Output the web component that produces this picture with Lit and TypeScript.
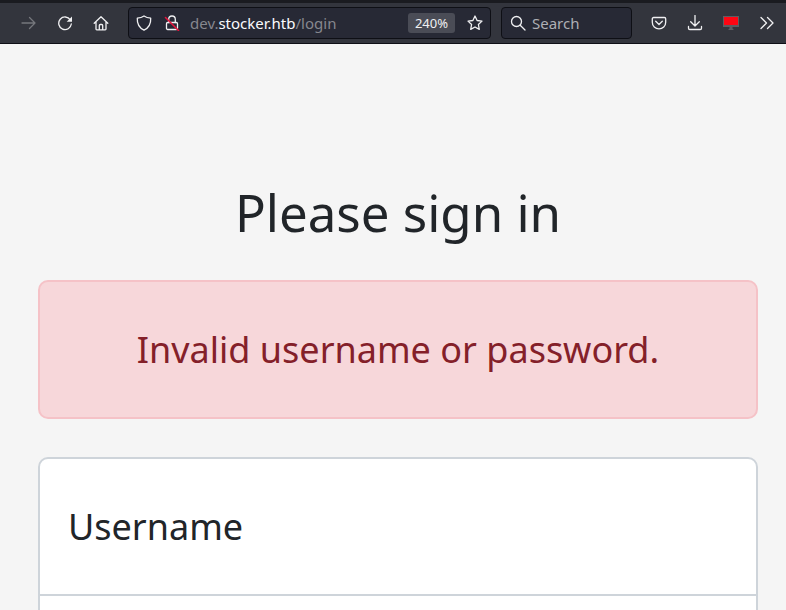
import { LitElement, html, css, svg } from "lit";
import { customElement, property } from "lit/decorators.js";

const icons: Record<string, unknown> = {
  forward: svg`<path d="M1 8h13M8.500 2.500L14 8l-5.500 5.500"/>`,
  reload: svg`<path d="M13.300 4.800A6.300 6.300 0 1 0 14.300 9"/><path class="solid" d="M15 1.500v5.300H9.700z"/>`,
  home: svg`<path d="M1.200 8.300L8 1.700l6.800 6.600M3 7v7a.8.8 0 0 0 .8.8h8.400A.8.8 0 0 0 13 14V7M6.300 14.500V10.500a1 1 0 0 1 1-1h1.400a1 1 0 0 1 1 1v4"/>`,
  shield: svg`<path d="M8 1C6 2.400 3.700 3 1.300 3.200c-.3 5 1.500 9.300 6.700 12 5.200-2.700 7-7 6.700-12C12.300 3 10 2.400 8 1z"/>`,
  lock: svg`<rect x="2.500" y="7.500" width="11" height="7" rx="1.200"/><path d="M4.700 7.500V4.300a3.300 3.300 0 0 1 6.600 0v3.200"/><path class="slash" d="M1.500 2.500l13 13"/>`,
  star: svg`<path d="M8 1l2.100 4.500 4.900.6-3.600 3.400.9 4.900L8 12l-4.300 2.400.9-4.900L1 6.100l4.900-.6z"/>`,
  search: svg`<circle cx="6.500" cy="6.500" r="5"/><path d="M10.200 10.200L15 15"/>`,
  pocket: svg`<path d="M2.600 2.500h10.800c.8 0 1.300.5 1.300 1.300v3.400a6.700 6.700 0 0 1-13.400 0V3.800c0-.8.5-1.300 1.300-1.300z"/><path d="M4.700 6.300L8 9.500l3.300-3.200"/>`,
  download: svg`<path d="M8 .5v10.300M3.700 6.700L8 11l4.300-4.300M1.500 11.500v1.700c0 .8.6 1.300 1.300 1.300h10.400c.7 0 1.300-.5 1.300-1.300v-1.700"/>`,
  monitor: svg`<path class="frame" d="M0 1h16v11H0zM6.500 12h3v1.500l1.500 1.500H5l1.500-1.500z"/><path class="screen" d="M1 2h14v8H1z"/>`,
  more: svg`<path d="M2 2.500L7.500 8 2 13.500M8.500 2.500L14 8l-5.500 5.500"/>`,
};

@customElement("bar-icon")
class BarIcon extends LitElement {
  @property() name = "";

  static styles = css`
    :host { display: block; flex: none; width: 16px; height: 16px; }
    svg { display: block; width: 16px; height: 16px; fill: none; stroke: currentColor;
      stroke-width: 1.3; stroke-linecap: round; stroke-linejoin: round; }
    .solid { fill: currentColor; stroke: none; }
    .slash { stroke: #e2143c; stroke-width: 1.6; }
    .frame { fill: #5c5d62; stroke: none; }
    .screen { fill: #ff0613; stroke: none; }
  `;

  render() {
    return html`<svg viewBox="0 0 16 16" aria-hidden="true">${icons[this.name]}</svg>`;
  }
}

@customElement("browser-bar")
class BrowserBar extends LitElement {
  static styles = css`
    :host {
      display: flex; align-items: center; flex: none; box-sizing: border-box; height: 44px;
      padding: 0 1px 0 11px; border-top: 3px solid #1a1b20; border-bottom: 1px solid #0f0f16;
      background: #33353d; color: #f0f0f2; font: 15px/20px "Noto Sans", sans-serif;
    }
    button { display: flex; align-items: center; justify-content: center; padding: 0;
      border: 0; background: none; color: inherit; font: inherit; }
    .tool { flex: none; width: 36px; height: 32px; }
    .tool:disabled { color: #75777c; }
    .field { display: flex; align-items: center; box-sizing: border-box; height: 32px;
      border: 1px solid #0e0f15; border-radius: 4px; background: #272935; }
    .address { flex: 1; min-width: 0; margin: 0 10px 0 9px; padding: 0 7px; gap: 12px; }
    .url { flex: 1; min-width: 0; margin-left: -2px; white-space: nowrap; overflow: hidden;
      color: #86878e; outline: none; }
    .host { color: #fbfbfe; }
    .zoom { height: 20px; padding: 0 7px; border-radius: 3px; background: #4a4c56;
      font-size: 13px; }
    .search { flex: none; width: 131px; margin-right: 9px; padding: 0 8px; gap: 6px; }
    .query { flex: 1; min-width: 0; padding: 0; border: 0; outline: none; background: none;
      color: #f0f0f2; font: inherit; }
    .query::placeholder { color: #aeafb4; opacity: 1; }
  `;

  private tool(name: string, label: string, disabled = false) {
    return html`<button class="tool" aria-label=${label} ?disabled=${disabled}>
      <bar-icon name=${name}></bar-icon>
    </button>`;
  }

  render() {
    return html`
      ${this.tool("forward", "Forward", true)}
      ${this.tool("reload", "Reload")}
      ${this.tool("home", "Home")}
      <div class="field address">
        <button aria-label="Tracking protection"><bar-icon name="shield"></bar-icon></button>
        <button aria-label="Connection not secure"><bar-icon name="lock"></bar-icon></button>
        <div class="url" role="textbox" aria-label="Address" contenteditable="true" spellcheck="false">dev.<span class="host">stocker.htb</span>/login</div>
        <button class="zoom" aria-label="Reset zoom level">240%</button>
        <button aria-label="Bookmark"><bar-icon name="star"></bar-icon></button>
      </div>
      <label class="field search">
        <bar-icon name="search"></bar-icon>
        <input class="query" type="text" placeholder="Search" aria-label="Search" />
      </label>
      ${this.tool("pocket", "Save to Pocket")}
      ${this.tool("download", "Downloads")}
      ${this.tool("monitor", "Proxy")}
      ${this.tool("more", "More tools")}
    `;
  }
}

@customElement("app-root")
class AppRoot extends LitElement {
  static styles = css`
    :host { display: flex; flex-direction: column; height: 100vh; overflow: hidden;
      background: #f5f5f5; color: #212529; font: 36px/60px "Noto Sans", sans-serif; }
    main { flex: 1; min-height: 0; overflow: hidden; padding: 136px 28px 0 38px; }
    h1 { margin: 0 0 36px; font-size: 51px; line-height: 64px; font-weight: 400;
      text-align: center; }
    .alert { margin-bottom: 38px; padding: 38px 38px 37px; border: 2px solid #f5c2c7;
      border-radius: 10px; background: #f7d7da; color: #842029; text-align: center; }
    .fields { border: 2px solid #ced4da; border-radius: 10px; background: #fff; }
    .row { display: grid; }
    .row > * { grid-area: 1 / 1; }
    .row + .row { border-top: 2px solid #ced4da; }
    .row label { align-self: center; padding: 0 28px; pointer-events: none; }
    .row input { box-sizing: border-box; width: 100%; height: 135px; padding: 0 28px;
      border: 0; border-radius: 10px; outline: none; background: none; color: inherit;
      font: inherit; }
  `;

  render() {
    return html`
      <browser-bar></browser-bar>
      <main>
        <form>
          <h1>Please sign in</h1>
          <div class="alert" role="alert">Invalid username or password.</div>
          <div class="fields">
            <div class="row">
              <input id="username" type="text" name="username" />
              <label for="username">Username</label>
            </div>
            <div class="row">
              <input type="password" name="password" aria-label="Password" />
            </div>
          </div>
        </form>
      </main>
    `;
  }
}
